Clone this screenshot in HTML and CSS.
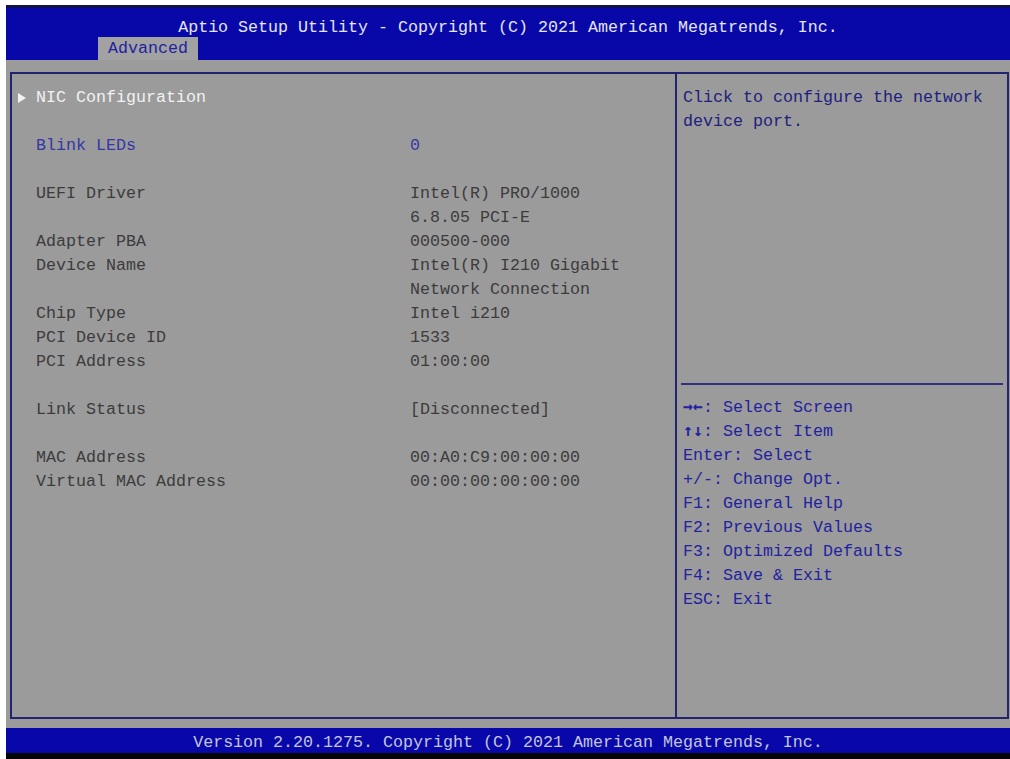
FILE: index.html
```html
<!DOCTYPE html>
<html lang="en">
<head>
  <meta charset="UTF-8" />
  <meta name="viewport" content="width=device-width, initial-scale=1.0" />
  <title>Aptio Setup Utility</title>
  <link rel="stylesheet" href="styles.css">
</head>
<body>
  <div class="screen">
    <div class="header">
      <div class="title">Aptio Setup Utility - Copyright (C) 2021 American Megatrends, Inc.</div>
      <div class="tab">Advanced</div>
    </div>

    <div class="main">
      <div class="panel left">
        <div class="row submenu"><span class="label">NIC Configuration</span></div>

        <div class="row gap option"><span class="label">Blink LEDs</span><span class="value">0</span></div>

        <div class="row gap"><span class="label">UEFI Driver</span><span class="value">Intel(R) PRO/1000<br>6.8.05 PCI-E</span></div>
        <div class="row"><span class="label">Adapter PBA</span><span class="value">000500-000</span></div>
        <div class="row"><span class="label">Device Name</span><span class="value">Intel(R) I210 Gigabit<br>Network Connection</span></div>
        <div class="row"><span class="label">Chip Type</span><span class="value">Intel i210</span></div>
        <div class="row"><span class="label">PCI Device ID</span><span class="value">1533</span></div>
        <div class="row"><span class="label">PCI Address</span><span class="value">01:00:00</span></div>

        <div class="row gap"><span class="label">Link Status</span><span class="value">[Disconnected]</span></div>

        <div class="row gap"><span class="label">MAC Address</span><span class="value">00:A0:C9:00:00:00</span></div>
        <div class="row"><span class="label">Virtual MAC Address</span><span class="value">00:00:00:00:00:00</span></div>
      </div>

      <div class="panel right">
        <div class="help">Click to configure the network<br>device port.</div>
        <div class="divider"></div>
        <div class="keys">
          <div><span class="arrow">&rarr;&larr;</span>: Select Screen</div>
          <div><span class="arrow">&uarr;&darr;</span>: Select Item</div>
          <div>Enter: Select</div>
          <div>+/-: Change Opt.</div>
          <div>F1: General Help</div>
          <div>F2: Previous Values</div>
          <div>F3: Optimized Defaults</div>
          <div>F4: Save &amp; Exit</div>
          <div>ESC: Exit</div>
        </div>
      </div>
    </div>

    <div class="footer">Version 2.20.1275. Copyright (C) 2021 American Megatrends, Inc.</div>
  </div>
</body>
</html>
```

FILE: styles.css
```css
html, body {
  margin: 0;
  height: 759px;
  overflow: hidden;
  background: #fff;
}
body {
  padding-top: 5px;
  padding-left: 6px;
  box-sizing: border-box;
  font-family: "Liberation Mono", "DejaVu Sans Mono", monospace;
  font-size: 16.67px;
  line-height: 24px;
}
.screen {
  width: 1004px;
  display: flex;
  flex-direction: column;
  background: #9b9b9b;
}

/* top bar */
.header {
  height: 52px;
  border-top: 3px solid #12124a;
  background: #0808a8;
  display: flex;
  flex-direction: column;
}
.title {
  margin-top: 6px;
  height: 23px;
  line-height: 28px;
  text-align: center;
  color: #e4e4f2;
}
.tab {
  align-self: flex-start;
  margin-left: 92px;
  width: 80px;
  padding: 0 10px;
  height: 23px;
  line-height: 24px;
  background: #a2a2a2;
  color: #2222a0;
}

/* panels */
.main {
  height: 668px;
  box-sizing: border-box;
  padding: 12px 1px 9px 4px;
  display: flex;
}
.panel {
  border-top: 2px solid #24246e;
  border-bottom: 2px solid #24246e;
  box-sizing: border-box;
}
.left {
  width: 667px;
  border-left: 2px solid #24246e;
  border-right: 2px solid #24246e;
  padding: 12px 0 0 24px;
}
.right {
  flex: 1;
  border-right: 2px solid #24246e;
  padding: 12px 4px 0 4px;
  display: flex;
  flex-direction: column;
  color: #2222a0;
}

.row {
  display: flex;
  color: #3c3c3c;
}
.row.gap { margin-top: 24px; }
.label { width: 374px; }
.option { color: #3636a8; }
.submenu { color: #f2f2f2; align-items: center; }
.submenu::before {
  content: "";
  margin-left: -18px;
  margin-right: 10px;
  border-left: 8px solid #f2f2f2;
  border-top: 5px solid transparent;
  border-bottom: 5px solid transparent;
}

.help {
  height: 297px;
  padding-left: 2px;
  color: #20207e;
}
.divider {
  height: 2px;
  background: #30307e;
}
.keys {
  padding: 11px 0 0 2px;
}
.keys div { height: 24px; }
.arrow {
  font-family: "DejaVu Sans Mono", monospace;
  font-size: 16.6px;
  font-weight: bold;
  line-height: 20px;
}

/* bottom bar */
.footer {
  height: 25px;
  line-height: 30px;
  background: #0808aa;
  color: #c4c4dc;
  text-align: center;
  border-bottom: 6px solid #050505;
}
```
